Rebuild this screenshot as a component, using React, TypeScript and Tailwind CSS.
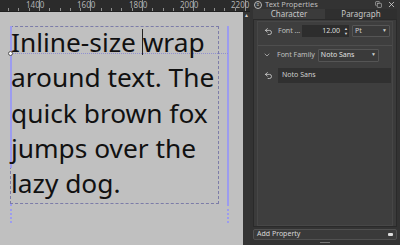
import { ChevronDown, Undo2, X, Copy } from "lucide-react";

const RULER_LABELS = [
  { label: "1400", x: 26 },
  { label: "1600", x: 77 },
  { label: "1800", x: 129 },
  { label: "2000", x: 180 },
  { label: "2200", x: 231 },
];

function Ruler() {
  const ticks = Array.from({ length: 25 }, (_, i) => i * 10.3 + 8);
  return (
    <div className="relative h-[12px] bg-[#2b2b2b] border-b border-[#202020] overflow-hidden">
      {ticks.map((t, i) => (
        <div
          key={i}
          className={`absolute bottom-0 w-px bg-[#8f8f8f] ${i % 5 === 3 ? "h-[11px]" : "h-[3px]"}`}
          style={{ left: t }}
        />
      ))}
      {RULER_LABELS.map((l) => (
        <span
          key={l.label}
          className="absolute top-[0px] font-['Noto_Sans',sans-serif] text-[8px] leading-[10px] text-[#b0b0b0]"
          style={{ left: l.x }}
        >
          {l.label}
        </span>
      ))}
    </div>
  );
}

function Canvas() {
  return (
    <div className="relative flex-1 bg-[#c0c0c0] overflow-hidden">
      {/* text shape frame */}
      <div className="absolute left-[10px] top-[14px] w-[209px] h-[178px] border border-dashed border-[#7c7ca8]" />
      <div className="absolute left-[10px] top-[14px] w-[2px] h-[142px] bg-[#9c9cf0]" />
      <div className="absolute left-[10px] top-[192px] h-[19px] border-l-2 border-dotted border-[#9c9cf0]" />
      <div className="absolute left-[227px] top-[14px] w-[2px] h-[178px] bg-[#9c9cf0]" />
      <div className="absolute left-[227px] top-[192px] h-[19px] border-l-2 border-dotted border-[#9c9cf0]" />
      <div className="absolute left-[10px] top-[41px] w-[218px] border-t border-dotted border-[#8f8fd0]" />
      <div className="absolute left-[8px] top-[39px] w-[5px] h-[5px] rounded-full border border-[#555] bg-white" />
      <div className="absolute left-[142px] top-[17px] w-px h-[26px] bg-[#222]" />
      <p className="absolute left-[11px] top-[13px] w-[212px] font-['Noto_Sans',sans-serif] text-[26.3px] leading-[35.25px] text-[#111]">
        Inline-size wrap around text. The quick brown fox jumps over the lazy dog.
      </p>
    </div>
  );
}

function Panel() {
  return (
    <div className="w-[150px] bg-[#333333] flex flex-col font-['Noto_Sans',sans-serif] text-[#d0d0d0]">
      <div className="h-[9px] flex items-center pl-[4px] pr-[4px] gap-[3px] text-[7.5px]">
        <span className="w-[8px] h-[8px] rounded-full border border-[#bbb] flex items-center justify-center text-[5px] leading-none">≡</span>
        <span className="leading-none text-[#bdbdbd]">Text Properties</span>
        <Copy size={7} strokeWidth={1.8} className="ml-auto text-[#ddd]" />
        <X size={9} strokeWidth={2} className="text-[#ddd] ml-[2px]" />
      </div>
      <div className="flex h-[10px] text-[8px] leading-[10px] mx-[3px]">
        <div className="flex-1 text-center bg-[#3b3b3b] text-[#c8c8c8]">Character</div>
        <div className="flex-1 text-center bg-[#2f2f2f] text-[#c8c8c8]">Paragraph</div>
      </div>
      <div className="flex-1 mx-[3px] border border-[#2a2a2a] bg-[#3b3b3b] px-[3px] pt-[1px] flex flex-col">
        <div className="flex-1 border border-[#474747] bg-[#3e3e3e] flex flex-col">
          <div className="flex items-center h-[18px] gap-[3px] pl-[6px] pr-[2px]">
            <Undo2 size={9} strokeWidth={2} className="text-[#ddd]" />
            <span className="text-[7px] text-[#c0c0c0] w-[21px] ml-[2px] whitespace-nowrap">Font ...</span>
            <div className="w-[47px] h-[12px] bg-[#2d2d2d] flex items-center justify-end pr-[1px] text-[7px] text-[#dedede]">
              <span>12.00</span>
              <span className="ml-[4px] text-[4px] leading-[5px] flex flex-col">
                <span>▲</span>
                <span>▼</span>
              </span>
            </div>
            <div className="flex-1 h-[12px] border border-[#555] rounded-[1px] bg-[#3a3a3a] flex items-center px-[2px] text-[7px]">
              <span>Pt</span>
              <span className="ml-auto text-[5px]">▼</span>
            </div>
          </div>
          <div className="border-t border-[#4e4e4e] mt-[5px]" />
          <div className="flex items-center h-[16px] gap-[3px] pl-[5px] mt-[1px]">
            <ChevronDown size={8} strokeWidth={2} className="text-[#ccc]" />
            <span className="text-[7px] text-[#c0c0c0] ml-[3px] whitespace-nowrap">Font Family</span>
            <div className="w-[61px] h-[13px] border border-[#555] rounded-[1px] bg-[#3a3a3a] flex items-center px-[2px] text-[7px]">
              <span className="text-[#e0e0e0]">Noto Sans</span>
              <span className="ml-auto text-[5px]">▼</span>
            </div>
          </div>
          <div className="flex items-center h-[18px] gap-[3px] pl-[6px] pr-[1px] mt-[3px]">
            <Undo2 size={9} strokeWidth={2} className="text-[#ddd]" />
            <div className="flex-1 ml-[2px] h-[15px] bg-[#303030] flex items-center px-[4px] text-[7px] text-[#cfcfcf]">
              Noto Sans
            </div>
          </div>
        </div>
      </div>
      <div className="mx-[3px] mt-[2px] h-[11px] border border-[#505050] rounded-[2px] bg-[#3a3a3a] flex items-center px-[3px] text-[7px] text-[#d8d8d8]">
        <span>Add Property</span>
        <span className="ml-auto w-[5px] h-[3px] bg-[#ddd] rounded-[1px]" />
      </div>
      <div className="h-[5px] flex justify-center items-center">
        <div className="w-[10px] h-px bg-[#777]" />
      </div>
    </div>
  );
}

export default function App() {
  return (
    <div className="w-[400px] h-[245px] flex bg-[#2f2f2f] overflow-hidden">
      <div className="w-[250px] flex flex-col">
        <Ruler />
        <div className="flex flex-1">
          <Canvas />
          <div className="w-[7px] bg-[#353535] flex flex-col items-center pt-[1px]">
            <span className="text-[5px] text-[#ccc] leading-none">▲</span>
          </div>
        </div>
      </div>
      <Panel />
    </div>
  );
}
